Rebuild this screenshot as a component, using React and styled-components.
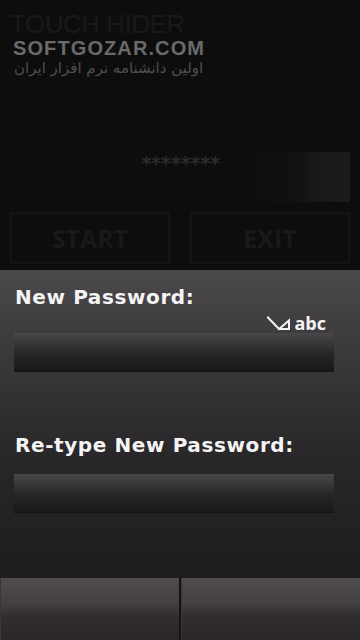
import React from "react";
import styled, { createGlobalStyle } from "styled-components";

const Global = createGlobalStyle`
  html, body { margin: 0; padding: 0; background: #0d0d0e; }
  body { width: 360px; height: 640px; overflow: hidden; font-family: "DejaVu Sans", sans-serif; }
`;

const Screen = styled.div`
  width: 360px;
  height: 640px;
  display: flex;
  flex-direction: column;
  background: #0d0d0e;
`;

const Back = styled.div`
  height: 270px;
  box-sizing: border-box;
  padding: 11px 10px 0 10px;
  display: flex;
  flex-direction: column;
`;

const AppTitle = styled.div`
  font-family: "Liberation Sans", sans-serif;
  font-size: 26px;
  line-height: 27px;
  color: #19191a;
  letter-spacing: -0.5px;
`;

const Brand = styled.div`
  font-family: "Liberation Sans", sans-serif;
  font-weight: 900;
  font-size: 20px;
  line-height: 20px;
  color: #6a6a6a;
  padding-left: 3px;
  letter-spacing: 1.1px;
`;

const Persian = styled.div`
  font-family: "DejaVu Sans", sans-serif;
  font-size: 15px;
  line-height: 20px;
  color: #4e4e4e;
  direction: rtl;
  width: 196px;
  text-align: left;
  padding-left: 4px;
`;

const PassRow = styled.div`
  margin-top: 74px;
  height: 50px;
  position: relative;
  display: flex;
  justify-content: center;
`;

const Dots = styled.div`
  font-family: "DejaVu Sans Mono", monospace;
  font-weight: 700;
  font-size: 19px;
  line-height: 19px;
  color: #2b2b2c;
  letter-spacing: -1.6px;
  padding-top: 2px;
`;

const FaintField = styled.div`
  position: absolute;
  right: 0;
  top: 0;
  width: 110px;
  height: 50px;
  background: linear-gradient(90deg, #0d0d0e 0%, #111112 50%, #19191a 75%, #1b1b1c 100%);
`;

const BtnRow = styled.div`
  margin-top: 10px;
  display: flex;
  gap: 20px;
`;

const GhostBtn = styled.div`
  flex: 1;
  height: 52px;
  box-sizing: border-box;
  border: 2px solid #141415;
  display: flex;
  align-items: center;
  justify-content: center;
  font-family: "Open Sans", sans-serif;
  font-weight: 700;
  font-size: 25px;
  color: #19191a;
`;

const Dialog = styled.div`
  height: 308px;
  box-sizing: border-box;
  padding: 12px 26px 0 14px;
  display: flex;
  flex-direction: column;
  background: linear-gradient(180deg, #4b484b 0%, #3a373a 30%, #2a272a 60%, #1f1c1f 100%);
`;

const Label = styled.div`
  font-family: "DejaVu Sans", sans-serif;
  font-weight: 700;
  font-size: 20px;
  line-height: 30px;
  color: #f4f4f4;
  letter-spacing: 0.6px;
  padding-left: 1px;
  margin-top: ${(p) => p.$mt || 0}px;
`;

const ModeRow = styled.div`
  display: flex;
  justify-content: flex-end;
  align-items: center;
  gap: 4px;
  height: 20px;
  margin-top: 1px;
  padding-right: 8px;
  color: #f4f4f4;
  font-family: "Open Sans", sans-serif;
  font-weight: 700;
  font-size: 18px;
`;

const Field = styled.div`
  height: 38px;
  margin-top: ${(p) => p.$mt || 0}px;
  background: linear-gradient(180deg, #4a474a 0%, #3a373a 25%, #262326 60%, #1b181b 100%);
  border-bottom: 1px solid #151215;
`;

const Softkeys = styled.div`
  height: 62px;
  display: flex;
  background: #1f1c1f;
`;

const Softkey = styled.div`
  flex: 1;
  background: linear-gradient(180deg, #4e4a4d 0%, #444043 40%, #302c2f 62%, #2a2629 100%);
  border-left: 1px solid #3a363a;
  border-right: ${(p) => (p.$divider ? "2px solid #141214" : "none")};
`;

function PenIcon() {
  return (
    <svg width="23" height="15" viewBox="0 0 23 15">
      <path d="M1 1.5 L12 13 L22 13 L22 4.5 L12 13" fill="none" stroke="#f4f4f4" strokeWidth="2" strokeLinejoin="miter" strokeLinecap="square" />
    </svg>
  );
}

export default function App() {
  return (
    <>
      <Global />
      <Screen>
        <Back>
          <AppTitle>TOUCH HIDER</AppTitle>
          <Brand>SOFTGOZAR.COM</Brand>
          <Persian>اولین دانشنامه نرم افزار ایران</Persian>
          <PassRow>
            <Dots>********</Dots>
            <FaintField />
          </PassRow>
          <BtnRow>
            <GhostBtn>START</GhostBtn>
            <GhostBtn>EXIT</GhostBtn>
          </BtnRow>
        </Back>
        <Dialog>
          <Label>New Password:</Label>
          <ModeRow>
            <PenIcon />
            <span>abc</span>
          </ModeRow>
          <Field $mt={0} />
          <Label $mt={58}>Re-type New Password:</Label>
          <Field $mt={14} />
        </Dialog>
        <Softkeys>
          <Softkey $divider />
          <Softkey />
        </Softkeys>
      </Screen>
    </>
  );
}
